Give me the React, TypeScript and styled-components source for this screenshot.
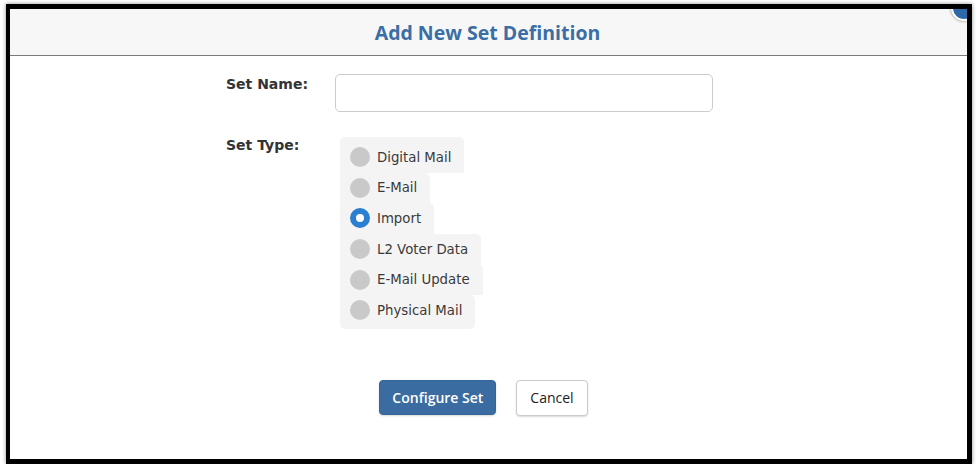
import { FC } from 'react';
import styled, { createGlobalStyle } from 'styled-components';

const GlobalStyle = createGlobalStyle`
  html, body {
    margin: 0;
    padding: 0;
    background: #ffffff;
  }
  body {
    font-family: "DejaVu Sans", Verdana, sans-serif;
  }
`;

const Frame = styled.div`
  box-sizing: border-box;
  width: 966px;
  height: 460px;
  margin: 4px 0 0 6px;
  border-style: solid;
  border-color: #000000;
  border-width: 5px 5px 5px 4px;
  box-shadow: 0 0 4px rgba(0, 0, 0, 0.45);
  background: #ffffff;
  display: flex;
  flex-direction: column;
`;

const Header = styled.header`
  position: relative;
  overflow: hidden;
  height: 46px;
  background: #f7f7f7;
  border-bottom: 1px solid #7a7a7a;
  display: flex;
  align-items: center;
  justify-content: center;
`;

const Title = styled.h2`
  margin: 0 0 0 -2px;
  font-family: "Open Sans", sans-serif;
  font-size: 19.5px;
  font-weight: 700;
  color: #3b6ea5;
  letter-spacing: 0;
`;

const CloseDot = styled.span`
  position: absolute;
  top: -14px;
  right: -10px;
  width: 22px;
  height: 22px;
  border-radius: 50%;
  background: #2f68a8;
  border: 2px solid #ffffff;
  box-shadow: 0 0 3px rgba(0, 0, 0, 0.5);
`;

const Body = styled.main`
  flex: 1;
  padding: 18px 0 0 216px;
  display: flex;
  flex-direction: column;
`;

const Row = styled.div<{ $gap?: number }>`
  display: flex;
  align-items: flex-start;
  margin-bottom: ${(p) => p.$gap ?? 0}px;
`;

const Label = styled.label<{ $top?: number }>`
  width: 109px;
  flex: none;
  padding-top: ${(p) => p.$top ?? 0}px;
  font-size: 14px;
  font-weight: 700;
  color: #333333;
`;

const TextInput = styled.input`
  box-sizing: border-box;
  width: 378px;
  height: 38px;
  border: 1px solid #cccccc;
  border-radius: 5px;
  background: #ffffff;
  outline: none;
`;

const RadioGroup = styled.div`
  margin-left: 5px;
  display: flex;
  flex-direction: column;
  align-items: flex-start;
`;

const Option = styled.label`
  box-sizing: border-box;
  height: 30.6px;
  display: flex;
  align-items: center;
  gap: 7px;
  padding: 0 13px 0 10px;
  background: #f4f4f4;
  font-size: 13.3px;
  color: #3a3a3a;

  &:first-child {
    height: 35.6px;
    padding-top: 5px;
    border-radius: 5px 5px 0 0;
  }
  &:last-child {
    height: 33.6px;
    padding-bottom: 3px;
    border-radius: 0 0 5px 5px;
  }
  &:not(:first-child) {
    border-top-right-radius: 5px;
  }
`;

const Dot = styled.span<{ $checked?: boolean }>`
  box-sizing: border-box;
  width: 20px;
  height: 20px;
  border-radius: 50%;
  flex: none;
  background: ${(p) => (p.$checked ? '#ffffff' : '#c9c9c9')};
  border: ${(p) => (p.$checked ? '6px solid #2b7fd0' : 'none')};
`;

const Actions = styled.div`
  margin-top: 51px;
  margin-left: -216px;
  padding-right: 10px;
  display: flex;
  justify-content: center;
  gap: 20px;
`;

const Button = styled.button<{ $primary?: boolean }>`
  box-sizing: border-box;
  height: ${(p) => (p.$primary ? 35 : 36)}px;
  padding: 0 ${(p) => (p.$primary ? 12 : 13)}px;
  border-radius: 4px;
  font-family: "Open Sans", sans-serif;
  font-size: 14px;
  font-weight: ${(p) => (p.$primary ? 600 : 400)};
  color: ${(p) => (p.$primary ? '#ffffff' : '#222222')};
  background: ${(p) => (p.$primary ? '#3a6ca1' : '#ffffff')};
  border: 1px solid ${(p) => (p.$primary ? '#35669a' : '#cccccc')};
  box-shadow: 0 1px 2px rgba(0, 0, 0, 0.15);
`;

const options = [
  'Digital Mail',
  'E-Mail',
  'Import',
  'L2 Voter Data',
  'E-Mail Update',
  'Physical Mail',
];

const App: FC = () => (
  <>
    <GlobalStyle />
    <Frame>
      <Header>
        <Title>Add New Set Definition</Title>
        <CloseDot />
      </Header>
      <Body>
        <Row $gap={25}>
          <Label $top={2}>Set Name:</Label>
          <TextInput type="text" />
        </Row>
        <Row>
          <Label $top={0}>Set Type:</Label>
          <RadioGroup>
            {options.map((o) => (
              <Option key={o}>
                <Dot $checked={o === 'Import'} />
                {o}
              </Option>
            ))}
          </RadioGroup>
        </Row>
        <Actions>
          <Button $primary>Configure Set</Button>
          <Button>Cancel</Button>
        </Actions>
      </Body>
    </Frame>
  </>
);

export default App;
